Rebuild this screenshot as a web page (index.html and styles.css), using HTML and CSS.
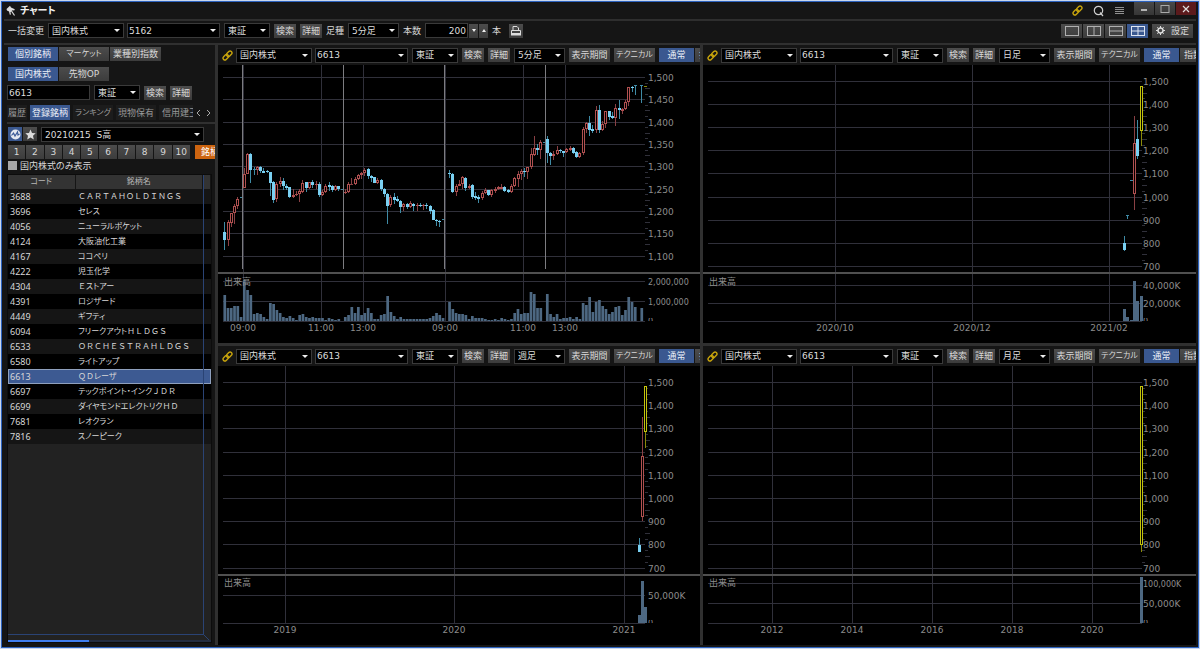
FILE: index.html
```html
<!DOCTYPE html>
<html lang="ja">
<head>
<meta charset="utf-8">
<title>チャート</title>
<link rel="stylesheet" href="styles.css">
</head>
<body>
<svg class="defs" width="0" height="0" aria-hidden="true">
  <symbol id="i-link" viewBox="0 0 12 12">
    <g fill="none" stroke="#c9a50c" stroke-width="1.5" transform="rotate(-45 6 6)">
      <rect x="0" y="4" width="6.6" height="4" rx="2"/><rect x="5.4" y="4" width="6.6" height="4" rx="2"/>
    </g>
  </symbol>
</svg>
<div class="window">
  <header class="titlebar">
    <svg class="pin" viewBox="0 0 10 12"><path d="M.5 4 4 .8l1 1.700 3.800 1.700-.6 1.300-1.700-.2-2 2L5 9.500 3.800 9.800 3 6.500 1 5.500z" fill="#ddd"/><path d="M5.500 6l3 4.500" stroke="#ddd" stroke-width="1.200" fill="none"/></svg>
    <h1>チャート</h1>
    <span class="spacer"></span>
    <button class="plain" aria-label="連動"><svg width="11" height="11"><use href="#i-link"/></svg></button>
    <button class="plain" aria-label="検索"><svg width="12" height="12" viewBox="0 0 12 12"><g fill="none" stroke="#d0d0d0" stroke-width="1.200"><circle cx="5.500" cy="5.500" r="4.200"/><path d="M7 7.500l3 3.500"/></g></svg></button>
    <button class="plain" aria-label="メニュー"><svg width="9" height="10" viewBox="0 0 9 10"><path d="M0 1.500h9M0 3.500h9M0 5.500h9M0 7.500h9" stroke="#909090"/></svg></button>
    <div class="winbtns">
      <button aria-label="最小化"><svg width="8" height="8"><path d="M1 5h6" stroke="#ddd" stroke-width="1.500"/></svg></button>
      <button aria-label="最大化"><svg width="10" height="8"><rect x="1" y=".5" width="8" height="7" fill="none" stroke="#aaa"/></svg></button>
      <button class="close" aria-label="閉じる"><svg width="8" height="8"><path d="M1 1l6 6M7 1l-6 6" stroke="#ddd" stroke-width="1.200"/></svg></button>
    </div>
  </header>

  <div class="toolbar">
    <span class="lead">一括変更</span>
    <span class="sel w76"><select aria-label="市場区分"><option>国内株式</option></select></span>
    <span class="sel w93"><select aria-label="銘柄コード"><option>5162</option></select></span>
    <span class="sel w46"><select aria-label="取引所"><option>東証</option></select></span>
    <button class="btn sm">検索</button>
    <button class="btn sm">詳細</button>
    <label for="leg">足種</label>
    <span class="sel w51"><select id="leg"><option>5分足</option></select></span>
    <label for="count">本数</label>
    <span class="spin"><input id="count" class="box" value="200"><button class="btn down" aria-label="減らす"></button><button class="btn up" aria-label="増やす"></button></span>
    <span class="unit">本</span>
    <button class="btn print" aria-label="印刷"><svg width="12" height="12" viewBox="0 0 12 12"><path d="M3 5V1.500h4L8.500 3v2M1.500 5.500h9v3h-9z" fill="none" stroke="#ddd"/><path d="M1 8h10v2.500H1z" fill="#ddd"/></svg></button>
    <span class="spacer"></span>
    <div class="layouts">
      <button class="btn" aria-label="1画面"><svg width="14" height="10"><rect x=".5" y=".5" width="13" height="9"/></svg></button>
      <button class="btn" aria-label="左右2画面"><svg width="14" height="10"><rect x=".5" y=".5" width="13" height="9"/><path d="M7 0v10"/></svg></button>
      <button class="btn" aria-label="上下2画面"><svg width="14" height="10"><rect x=".5" y=".5" width="13" height="9"/><path d="M0 5h14"/></svg></button>
      <button class="btn on" aria-label="4画面"><svg width="14" height="10"><rect x=".5" y=".5" width="13" height="9"/><path d="M7 0v10M0 5h14"/></svg></button>
    </div>
    <button class="btn config"><svg width="9" height="9" viewBox="0 0 9 9"><circle cx="4.500" cy="4.500" r="2.500" fill="none" stroke="#ddd" stroke-width="1.500"/><path d="M4.500 0v2M4.500 7v2M0 4.500h2M7 4.500h2M1.300 1.300l1.200 1.200M6.500 6.500l1.200 1.200M7.700 1.300 6.500 2.500M2.500 6.500 1.300 7.700" stroke="#ddd"/></svg>設定</button>
  </div>

  <main>
    <aside>
      <div class="seg"><button class="btn on">個別銘柄</button><button class="btn kana">マーケット</button><button class="btn">業種別指数</button></div>
      <div class="seg second"><button class="btn on">国内株式</button><button class="btn">先物OP</button></div>
      <div class="search">
        <input class="box code" aria-label="コード" value="6613">
        <span class="sel w46"><select aria-label="取引所"><option>東証</option></select></span>
        <button class="btn sm">検索</button>
        <button class="btn sm">詳細</button>
      </div>
      <nav class="tabs">
        <button class="short">履歴</button><button class="on">登録銘柄</button><button class="kana">ランキング</button><button>現物保有</button><button class="cut">信用建玉</button>
        <button class="arrow" aria-label="前へ"><svg width="5" height="8"><path d="M4 1 1 4l3 3"/></svg></button>
        <button class="arrow" aria-label="次へ"><svg width="5" height="8"><path d="M1 1l3 3-3 3"/></svg></button>
      </nav>
      <div class="list-pick">
        <button class="btn on" aria-label="マイリスト"><svg width="11" height="11" viewBox="0 0 11 11"><circle cx="5.500" cy="5.500" r="5" fill="#e4e8f0"/><path d="M1.500 6.500 3.500 4l1.500 3 2.500-4 .5 3 1.500-1" fill="none" stroke="#3a5a98" stroke-width="1.200"/></svg></button>
        <button class="btn" aria-label="お気に入り"><svg width="11" height="11" viewBox="0 0 11 11"><path d="M5.500.5 7 4l3.700.3L8 6.800l.8 3.700-3.300-2-3.300 2L3 6.800.3 4.300 4 4z" fill="#ddd"/></svg></button>
        <span class="sel grow"><select aria-label="登録リスト"><option>20210215&nbsp; S高</option></select></span>
      </div>
      <div class="pages">
        <button class="btn">1</button><button class="btn">2</button><button class="btn">3</button><button class="btn">4</button><button class="btn">5</button><button class="btn">6</button><button class="btn">7</button><button class="btn">8</button><button class="btn">9</button><button class="btn">10</button><button class="btn orange">銘柄</button>
      </div>
      <label class="check"><input type="checkbox">国内株式のみ表示</label>
      <div class="stocks">
        <table>
          <thead><tr><th class="c1">コード</th><th>銘柄名</th><th class="c3"></th></tr></thead>
          <tbody>
            <tr><td>3688</td><td colspan="2" class="wide">ＣＡＲＴＡＨＯＬＤＩＮＧＳ</td></tr>
            <tr><td>3696</td><td colspan="2">セレス</td></tr>
            <tr><td>4056</td><td colspan="2">ニューラルポケット</td></tr>
            <tr><td>4124</td><td colspan="2">大阪油化工業</td></tr>
            <tr><td>4167</td><td colspan="2">ココペリ</td></tr>
            <tr><td>4222</td><td colspan="2">児玉化学</td></tr>
            <tr><td>4304</td><td colspan="2"><span class="wide">Ｅ</span>ストアー</td></tr>
            <tr><td>4391</td><td colspan="2">ロジザード</td></tr>
            <tr><td>4449</td><td colspan="2">ギフティ</td></tr>
            <tr><td>6094</td><td colspan="2">フリークアウト<span class="wide">ＨＬＤＧＳ</span></td></tr>
            <tr><td>6533</td><td colspan="2" class="wide">ＯＲＣＨＥＳＴＲＡＨＬＤＧＳ</td></tr>
            <tr><td>6580</td><td colspan="2">ライトアップ</td></tr>
            <tr class="picked"><td>6613</td><td colspan="2"><span class="wide">ＱＤ</span>レーザ</td></tr>
            <tr><td>6697</td><td colspan="2">テックポイント・インク<span class="wide">ＪＤＲ</span></td></tr>
            <tr><td>6699</td><td colspan="2">ダイヤモンドエレクトリク<span class="wide">ＨＤ</span></td></tr>
            <tr><td>7681</td><td colspan="2">レオクラン</td></tr>
            <tr><td>7816</td><td colspan="2">スノーピーク</td></tr>
          </tbody>
        </table>
        <div class="frame"></div>
        <svg class="corner" width="8" height="8"><path d="M0 0l8 8" stroke="#2a4374"/></svg>
        <div class="hscroll"><span></span></div>
      </div>
    </aside>
    <div class="charts" id="charts"></div>
  </main>
</div>

<template id="pane">
  <section class="pane">
    <div class="pane-bar">
      <button class="plain" aria-label="連動"><svg width="11" height="11"><use href="#i-link"/></svg></button>
      <span class="sel w76"><select aria-label="市場区分"><option>国内株式</option></select></span>
      <span class="sel w93"><select aria-label="銘柄コード"><option>6613</option></select></span>
      <span class="sel w46"><select aria-label="取引所"><option>東証</option></select></span>
      <button class="btn sm">検索</button>
      <button class="btn sm">詳細</button>
      <span class="sel w51"><select class="period" aria-label="足種"><option></option></select></span>
      <button class="btn md">表示期間</button>
      <button class="btn md kana">テクニカル</button>
      <div class="mode"><button class="btn on">通常</button><button class="btn">指数</button></div>
    </div>
    <div class="plot"></div>
  </section>
</template>
<script src="charts.js"></script>
</body>
</html>
```
FILE: styles.css
```css
* { box-sizing: border-box; }
html, body { height: 100%; }
body {
  margin: 0;
  padding: 1px;
  background: #c8d6ee;
  color: #d8d8d8;
  font: 9px/12px "DejaVu Sans", "Noto Sans CJK JP", sans-serif;
  font-feature-settings: "palt";
}
button, input, select {
  margin: 0;
  padding: 0;
  border: 0;
  border-radius: 0;
  color: inherit;
  font: inherit;
  font-feature-settings: inherit;
}
svg { display: block; flex: none; }
.defs { position: absolute; }
.spacer { flex: 1; }

.window {
  display: flex;
  flex-direction: column;
  height: 100%;
  padding: 0 2px 2px;
  border: 1px solid #2c62be;
  background: #151515;
}

.titlebar { display: flex; align-items: center; height: 19px; flex: none; padding-left: 2px; border-bottom: 2px solid #2e2e2e; }
.pin { width: 10px; height: 12px; margin-right: 4px; }
h1 { margin: 0; color: #f0f0f0; font-size: 10px; font-weight: bold; }
.plain { display: flex; align-items: center; background: none; flex: none; }
.titlebar .plain { margin-right: 10px; }
.winbtns { display: flex; gap: 1px; align-self: flex-start; }
.winbtns button { display: flex; align-items: center; justify-content: center; width: 20px; height: 13px; background: linear-gradient(#484848, #363636); }
.winbtns .close { background: #5c1a1c; }

.btn {
  display: flex;
  align-items: center;
  justify-content: center;
  flex: none;
  height: 14px;
  background: linear-gradient(#4c4c4c, #3c3c3c);
  white-space: nowrap;
}
.on { background: #3a5890; color: #e8edf6; }
.kana { font-size: 8px; }
.sm { width: 22px; }
.md { width: 41px; }
.box { height: 15px; background: #000; border: 1px solid #3a3a3a; color: #ddd; }
.sel { position: relative; flex: none; height: 15px; }
.sel select {
  display: block;
  width: 100%;
  height: 15px;
  padding: 0 10px 0 3px;
  background: #000;
  border: 1px solid #3a3a3a;
  appearance: none;
  color: #ddd;
}
.sel::after {
  content: "";
  position: absolute;
  top: 6px;
  right: 4px;
  border: 3px solid transparent;
  border-top-color: #eee;
  border-bottom: 0;
  pointer-events: none;
}
.w46 { width: 46px; }
.w51 { width: 51px; }
.w76 { width: 76px; }
.w93 { width: 93px; }
.w93 select { padding-left: 1px; }

.toolbar { display: flex; align-items: center; gap: 4px; height: 24px; flex: none; padding: 0 3px 3px 4px; border-bottom: 2px solid #303030; }
.toolbar .w93 { margin-left: -1px; }
.lead { width: 36px; }
.spin { display: flex; gap: 1px; align-items: center; }
.spin input { width: 43px; padding-right: 1px; text-align: right; }
.spin .btn { width: 9px; }
.spin .btn::before { content: ""; border: 2px solid transparent; }
.spin .down::before { border-top: 3px solid #eee; border-bottom: 0; }
.spin .up::before { border-bottom: 3px solid #eee; border-top: 0; }
.print { width: 14px; margin-left: 4px; }
.layouts { display: flex; gap: 1px; }
.layouts .btn { width: 21px; }
.layouts svg { fill: none; stroke: #b0b0b0; }
.layouts .on svg { stroke: #e0e6f2; }
.config { width: 41px; gap: 6px; }

main { display: flex; flex: 1; min-height: 0; }
aside {
  display: flex;
  flex-direction: column;
  width: 214px;
  flex: none;
  padding: 2px 0 2px 3px;
  border-right: 3px solid #303030;
  background: #151515;
}
aside > * { flex: none; }
.seg { display: flex; gap: 1px; padding-left: 1px; }
.seg .btn { width: 50px; }
.seg .btn + .btn + .btn { width: 51px; }
.second { margin-top: 6px; }
.search { display: flex; align-items: center; gap: 4px; margin-top: 4px; }
.code { width: 83px; padding-left: 1px; }
.tabs { display: flex; align-items: center; gap: 3px; margin-top: 5px; border-bottom: 2px solid #303030; height: 19px; padding-bottom: 2px; color: #999; }
.tabs button { width: 40px; height: 15px; flex: none; background: #1c1c1c; white-space: nowrap; overflow: hidden; }
.tabs .short { width: 20px; }
.tabs .on { background: #3a5890; color: #e8edf6; }
.tabs .cut { width: 34px; text-align: left; padding-left: 3px; }
.tabs .arrow { width: 7px; background: none; }
.arrow svg { fill: none; stroke: #aaa; }
.list-pick { display: flex; gap: 1px; margin-top: 3px; padding: 0 11px 0 1px; }
.list-pick .btn { width: 14px; }
.grow { flex: 1; margin-left: 3px; }
.pages { display: flex; gap: 1px; margin-top: 3px; padding-left: 1px; overflow: hidden; }
.pages .btn { flex: 1; }
.pages .orange { flex: none; width: 20px; margin-left: 4px; padding-left: 6px; justify-content: flex-start; overflow: hidden; background: #cc6410; color: #fff; }
.check { display: flex; align-items: center; gap: 3px; height: 13px; margin: 0 0 2px 1px; }
.check input { width: 9px; height: 9px; appearance: none; background: #a8a8a8; }
aside .stocks { position: relative; flex: 1; min-height: 0; margin: 0 3px 0 0; overflow: hidden; border: 1px solid #0c0c0c; background: #222; }
table { width: 100%; border-collapse: collapse; table-layout: fixed; font-size: 8px; line-height: 14px; }
th { height: 14px; padding: 0; background: #333; border-right: 1px solid #151515; color: #b8b8b8; font-weight: normal; }
th.c1 { width: 67px; }
th.c3 { width: 8px; }
td { height: 15px; padding: 0 0 0 3px; white-space: nowrap; }
td:first-child { font: 9px/14px "Noto Sans", sans-serif; padding-left: 2px; }
tbody tr { background: #151515; }
tbody tr:nth-child(even) { background: #000; }
tbody tr.picked { background: #3d5a92; outline: 1px solid #8fa0bd; outline-offset: -1px; }
.wide { font-feature-settings: normal; }
.frame { position: absolute; inset: 0 7px 7px 0; border: 1px solid #2a4374; border-width: 0 1px 1px 0; }
.corner { position: absolute; right: 0; bottom: 0; }
.hscroll { position: absolute; right: 0; bottom: 0; left: 0; height: 2px; background: #222c40; }
.hscroll span { display: block; width: 40%; height: 2px; background: #3f7ef0; }

.charts { display: grid; flex: 1; min-width: 0; grid-template: 298fr 299fr / 482fr 493fr; gap: 3px; background: #303030; }
.pane { display: flex; flex-direction: column; min-width: 0; min-height: 0; overflow: hidden; background: #000; }
.pane-bar { display: flex; align-items: center; gap: 4px; height: 20px; flex: none; padding-left: 4px; overflow: hidden; background: #151515; }
.pane-bar .plain { margin-right: -1px; }
.pane-bar .w93 { margin-left: -1px; }
.mode { display: flex; gap: 1px; }
.mode .btn { width: 35px; }
.mode .btn + .btn { width: 26px; }
.plot { flex: 1; min-height: 0; }
.plot text { fill: #8c8c8c; font-feature-settings: normal; }
.plot .small { font-size: 8px; }
.grid { stroke: #30303a; }
.session { stroke: #7c7c80; }
.split { stroke: #505050; stroke-width: 2; }
.vol { fill: #4d6882; }
.up-c { fill: #000; stroke: #b05050; }
.dn-c { fill: #7ad0f2; stroke: #7ad0f2; }
.now-c { fill: #000; stroke: #c4c40c; }
.up-w { stroke: #8a4044; }
.dn-w { stroke: #3f8ba6; }
.now-w { stroke: #8a8a08; }
```
FILE: charts.js
```js
// Candle: kind, body top, body bottom, wick top, wick bottom (thirds of a pixel); "-" is an empty slot.
const FIVE_MIN = `d 516 540 486 570|u 487 540 480 557|u 460 490 460 502|u 437 460 432 492|u 416 437 411 447|d 411 413 411 413|u 343 385 325 385|u 282 343 279 343|d 283 330 278 370|d 327 329 320 346
u 322 329 318 346|d 322 333 318 338|d 333 338 325 340|d 334 337 330 340|d 335 368 335 407|d 367 420 364 430|u 371 418 367 425|u 364 371 352 380|d 364 377 355 390|d 377 383 372 391
d 380 412 380 415|u 404 412 388 414|u 402 405 394 408|u 394 402 388 425|u 368 396 361 398|d 367 383 366 397|u 367 383 366 386|d 367 375 360 383|u 371 374 364 388|d 371 405 367 411
u 396 404 390 407|u 378 396 373 398|d 374 380 365 392|d 379 391 376 396|u 379 391 375 392|d 379 388 377 392|d 387 389 386 390|u 397 400 388 403|u 371 397 365 400|u 371 373 354 375
u 356 372 350 375|u 345 358 341 360|u 338 346 335 358|u 330 340 325 348|d 328 348 324 357|d 347 353 345 367|d 352 368 350 370|u 359 369 354 371|d 359 388 357 392|d 386 403 383 411
d 402 437 398 492|u 411 435 406 440|d 411 419 400 432|d 418 424 408 426|d 423 441 420 458|u 433 440 428 452|d 433 441 430 446|u 430 440 423 445|d 431 437 428 452|u 434 438 428 452
d 434 437 430 440|u 434 437 432 450|d 434 439 430 446|d 438 452 434 462|d 450 479 447 481|d 479 483 477 497|d 482 486 480 500|d 478 480 478 480|-|d 338 342 331 354
d 341 396 340 398|u 377 397 372 407|u 373 377 360 378|u 352 373 348 387|d 354 384 352 392|u 377 384 372 388|d 375 411 373 418|d 409 413 395 420|d 412 417 405 428|u 398 415 393 420
u 391 400 384 402|d 391 405 389 407|u 391 405 387 411|u 386 393 380 398|u 382 388 379 391|u 380 386 373 388|d 380 392 377 395|d 390 396 387 399|u 377 396 373 398|u 355 378 350 382
u 341 356 333 380|u 332 342 328 360|d 332 337 324 350|u 322 336 320 357|u 283 322 265 326|u 265 284 228 288|d 264 270 252 285|u 247 269 240 297|d 247 249 247 249|d 237 280 228 310
d 279 289 277 315|u 281 289 273 300|u 271 282 258 284|d 271 274 266 278|d 274 278 272 292|u 267 276 263 280|u 263 269 259 272|d 265 279 261 282|d 277 290 273 293|u 278 291 275 293
u 208 280 201 284|u 189 208 185 220|d 189 210 168 229|d 208 212 195 218|u 150 210 139 220|d 150 211 135 218|u 192 211 183 213|u 153 193 152 203|d 154 170 152 180|d 168 174 155 178
u 143 173 133 197|d 143 151 120 177|u 147 152 144 163|u 126 148 121 150|u 82 127 80 137|d 80 83 77 97|d 76 78 76 104|-|d 76 78 76 128|n 77 79 77 79`
  .split(/[|\n]/).map(s => s.split(' '));
const FIVE_MIN_VOL = [78,38,38,44,46,12,122,93,78,20,25,20,12,7,53,50,33,25,12,8,16,10,4,17,21,13,9,12,8,9,9,4,10,6,4,5,0,11,18,41,24,42,18,23,38,23,7,6,18,20,75,28,14,7,13,5,5,5,6,5,6,5,6,9,16,25,18,9,0,56,35,24,22,20,17,6,15,10,8,8,7,3,4,6,4,9,5,4,5,24,37,20,24,24,86,80,38,38,0,82,21,11,20,5,8,9,11,5,11,5,53,48,71,27,58,62,44,35,20,27,42,44,17,32,73,58,42,0,38,0];
// The midday break leaves no empty slot in the candles before it, so the volumes follow the same index.
const bars = FIVE_MIN.map((c, i) => ({ r: 475.7 - i * 3.258, c, v: FIVE_MIN_VOL[i] / 3 }));
const bar = (r, v, text) => ({ r, v, c: text.split(' ') });

// r values are distances from the right edge of the pane; y values are distances from the top of the plot.
const PANES = [
  { period: '5分足', h: 278, axis: 55, label: 3, off: -5, top: 12, step: 22.33, first: 1500, unit: 50, rows: 9, split: 208, base: 256,
    vols: [[216, '2,000,000', 1], [236, '1,000,000', 1]],
    times: [[457, '09:00'], [379, '11:00'], [337, '13:00'], [255, '09:00'], [177, '11:00'], [135, '13:00']],
    sessions: [458, 357, 256, 155], w: 2.7, data: bars },
  { period: '日足', h: 278, axis: 54, label: 1, off: -25, top: 16, step: 23.1, first: 1500, unit: 100, rows: 9, split: 208, base: 256,
    vols: [[220, '40,000K'], [238, '20,000K']],
    times: [[361, '2020/10'], [224, '2020/12'], [87, '2021/02']], sessions: [], w: 3,
    data: [bar(72, 12, 'd 609 630 588 632'), bar(69, 4, 'd 525 527 525 537'), bar(65, 1, 'd 421 423 421 423'),
           bar(62, 40, 'u 310 463 228 510'), bar(59, 20, 'd 296 347 240 357'), bar(55, 25, 'n 137 273 137 318')] },
  { period: '週足', h: 279, axis: 55, label: 3, off: -26, top: 16, step: 23.2, first: 1500, unit: 100, rows: 9, split: 209, base: 257,
    vols: [[229, '50,000K']],
    times: [[415, '2019'], [246, '2020'], [76, '2021']], sessions: [], w: 3,
    data: [bar(61, 8, 'd 614 635 594 635'), bar(58, 42, 'u 348 530 231 542'), bar(55, 16, 'n 139 275 139 323')] },
  { period: '月足', h: 279, axis: 54, label: 1, off: -26, top: 16, step: 23.2, first: 1500, unit: 100, rows: 9, split: 209, base: 257,
    vols: [[217, '100,000K', 1], [237, '50,000K']],
    times: [[424, '2012'], [344, '2014'], [264, '2016'], [184, '2018'], [104, '2020']], sessions: [], w: 3,
    data: [bar(55, 46, 'n 139 615 139 635')] }
];

function draw(el, p) {
  const W = el.clientWidth, H = el.clientHeight, k = H / p.h;
  const X = r => Math.round(W - r), Y = y => Math.round(y * k);
  const right = X(p.axis), labelX = right + p.label, cy = v => Y(v / 3 + p.off);
  const out = [];
  const line = (cls, x1, y1, x2, y2) => out.push(`<path class="${cls}" d="M${x1} ${y1}L${x2} ${y2}"/>`);
  for (const [r] of p.times) line('grid', X(r) + .5, 0, X(r) + .5, Y(p.base));
  for (let i = 0; i < p.rows; i++) {
    const y = Y(p.top + i * p.step);
    line('grid', 5, y + .5, right, y + .5);
    out.push(`<text x="${labelX}" y="${y + 4}">${(p.first - i * p.unit).toLocaleString('en-US')}</text>`);
    if (i < p.rows - 1) for (let q = 1; q < 4; q++) {
      const ty = Y(p.top + (i + q / 4) * p.step) + .5;
      line('grid', right, ty, right + (q === 2 ? 5 : 3), ty);
    }
  }
  for (const [y, t, small] of p.vols) {
    line('grid', 5, Y(y) + .5, right, Y(y) + .5);
    out.push(`<text class="${small ? 'small' : ''}" x="${labelX}" y="${Y(y) + 4}">${t}</text>`);
  }
  line('grid', 5, Y(p.base) + .5, right, Y(p.base) + .5);
  out.push(`<svg x="${labelX}" y="${Y(p.base) - 3}" width="20" height="3"><text class="small" x="0" y="6">0</text></svg>`);
  for (const b of p.data) {
    const x = X(b.r);
    if (b.v) out.push(`<rect class="vol" x="${p.w < 3 ? W - b.r - .9 : x - 1}" y="${Y(p.base - b.v)}" width="${p.w}" height="${Math.max(1, Y(p.base) - Y(p.base - b.v))}"/>`);
    const [kind, t, o, hi, lo] = b.c;
    if (kind === '-') continue;
    const n = { u: 'up', d: 'dn', n: 'now' }[kind];
    line(n + '-w', x + .5, cy(hi), x + .5, cy(lo));
    const top = cy(t), h = Math.max(0, cy(o) - top - 1);
    if (h === 0) line((o - t < 3 ? n + '-w' : n + '-c'), x - 1, top + .5, x + 2, top + .5);
    else out.push(`<rect class="${n}-c" x="${x - .5}" y="${top + .5}" width="2" height="${h}"/>`);
  }
  for (const r of p.sessions) line('session', X(r) + .5, 0, X(r) + .5, Y(204));
  line('split', 0, Y(p.split), W, Y(p.split));
  out.push(`<text x="6" y="${Y(220)}">出来高</text>`);
  for (const [r, t] of p.times) out.push(`<text text-anchor="middle" x="${X(r)}" y="${Y(p.base) + 10}">${t}</text>`);
  el.innerHTML = `<svg width="${W}" height="${H}" role="img" aria-label="${p.period}チャート">${out.join('')}</svg>`;
}

const host = document.getElementById('charts');
const plots = PANES.map(p => {
  const node = document.getElementById('pane').content.cloneNode(true);
  node.querySelector('.period option').textContent = p.period;
  const el = node.querySelector('.plot');
  host.append(node);
  return el;
});
const render = () => {
  plots.forEach(el => { el.innerHTML = ''; });
  plots.forEach((el, i) => draw(el, PANES[i]));
};
render();
addEventListener('resize', render);
```
